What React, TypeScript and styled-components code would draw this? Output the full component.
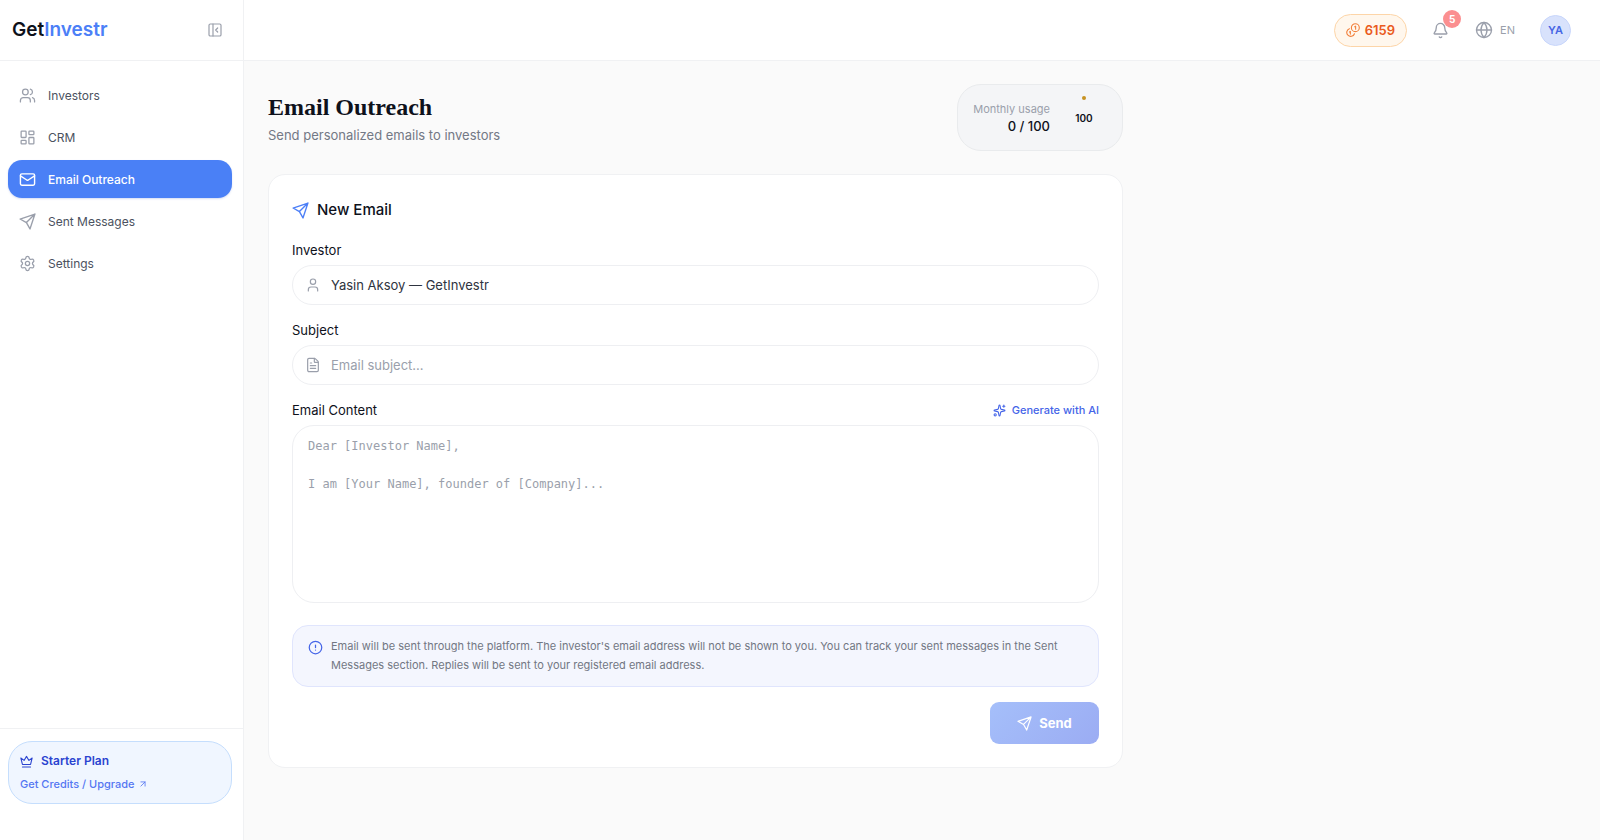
import React from "react";
import styled, { createGlobalStyle, css } from "styled-components";
import {
  Users, LayoutDashboard, Mail, Settings, PanelLeftClose, Bell, Globe,
  User, FileText, CircleAlert, Sparkles, ArrowUpRight,
} from "lucide-react";

const Global = createGlobalStyle`
  *, *::before, *::after { box-sizing: border-box; }
  body { margin: 0; background: #fafafa; font-family: Inter, "Open Sans", sans-serif; font-size: 13px; color: #0e111b; }
  button, input, textarea { font: inherit; color: inherit; }
  button { cursor: pointer; }
  h1, h2, p { margin: 0; }
`;

const Shell = styled.div`
  display: grid;
  grid-template-columns: 244px minmax(0, 1fr);
  min-height: 100vh;
`;

const Sidebar = styled.aside`
  display: flex;
  flex-direction: column;
  background: #fff;
  border-right: 1px solid #f0f1f3;
`;

const Brand = styled.div`
  display: flex;
  align-items: center;
  justify-content: space-between;
  height: 61px;
  padding: 0 20px 0 12px;
  border-bottom: 1px solid #f0f1f3;
`;

const Logo = styled.a`
  font-size: 19px;
  line-height: 24px;
  font-weight: 600;
  color: #0e111b;
  text-decoration: none;
  span { color: #4c7ff7; }
`;

const IconButton = styled.button`
  position: relative;
  display: flex;
  padding: 0;
  border: 0;
  background: none;
  color: #9a9fab;
`;

const Nav = styled.nav`
  flex: 1;
  display: flex;
  flex-direction: column;
  gap: 4px;
  padding: 15px 11px 15px 8px;
`;

const NavLink = styled.a<{ $active?: boolean }>`
  display: flex;
  align-items: center;
  gap: 12px;
  height: 38px;
  padding: 0 11px;
  border-radius: 14px;
  font-size: 12px;
  color: #4b5260;
  text-decoration: none;
  svg { color: #9a9fab; }
  ${(p) => p.$active && css`
    background: #4a80f6;
    color: #fff;
    font-weight: 500;
    box-shadow: 0 1px 2px rgba(40, 80, 200, 0.2);
    svg { color: #fff; }
  `}
`;

const PlanArea = styled.div`
  padding: 12px 11px 36px 8px;
  border-top: 1px solid #f0f1f3;
`;

const PlanCard = styled.div`
  display: flex;
  flex-direction: column;
  gap: 7px;
  padding: 11px;
  border: 1px solid #c5defd;
  border-radius: 24px;
  background: #f0f6ff;
`;

const PlanName = styled.div`
  display: flex;
  align-items: center;
  gap: 8px;
  font-size: 12px;
  line-height: 16px;
  font-weight: 600;
  color: #2b44d0;
`;

const PlanLink = styled.a`
  display: flex;
  align-items: center;
  gap: 4px;
  font-size: 11px;
  line-height: 16px;
  font-weight: 500;
  color: #5577f2;
  text-decoration: none;
`;

const Page = styled.div`
  display: flex;
  flex-direction: column;
`;

const TopBar = styled.header`
  display: flex;
  align-items: center;
  justify-content: flex-end;
  height: 61px;
  padding-right: 29px;
  background: #fff;
  border-bottom: 1px solid #f0f1f3;
`;

const Credits = styled.button`
  display: flex;
  align-items: center;
  gap: 5px;
  height: 33px;
  margin-right: 25px;
  padding: 0 11px;
  border: 1px solid #fdd5a8;
  border-radius: 17px;
  background: #fff7ed;
  color: #ea5a20;
  font-size: 13px;
  font-weight: 600;
  svg { color: #f2803c; }
`;

const Count = styled.span`
  position: absolute;
  left: 11px;
  top: -12px;
  width: 18px;
  height: 18px;
  border-radius: 50%;
  background: #fb8f90;
  color: #fff;
  font-size: 10px;
  line-height: 18px;
  font-weight: 700;
  text-align: center;
`;

const Language = styled.button`
  display: flex;
  align-items: center;
  gap: 7px;
  margin: 0 25px 0 26px;
  padding: 0;
  border: 0;
  background: none;
  color: #9a9fab;
  font-size: 11px;
`;

const Avatar = styled.button`
  width: 31px;
  height: 31px;
  padding: 0;
  border: 1px solid #c8d6fb;
  border-radius: 50%;
  background: #d8e2fc;
  color: #4666e4;
  font-size: 11px;
  font-weight: 600;
`;

const Content = styled.main`
  width: 100%;
  max-width: 903px;
  padding: 23px 24px;
`;

const Heading = styled.div`
  display: flex;
  align-items: center;
  justify-content: space-between;
  margin-bottom: 23px;
`;

const Title = styled.h1`
  padding-top: 2px;
  font-family: "Liberation Serif", serif;
  font-size: 24px;
  line-height: 32px;
  font-weight: 700;
`;

const Subtitle = styled.p`
  line-height: 24px;
  color: #737885;
`;

const Usage = styled.section`
  display: flex;
  align-items: center;
  gap: 10px;
  height: 67px;
  padding: 0 14px 0 15px;
  border: 1px solid #e9ebed;
  border-radius: 24px;
  background: #f4f5f7;
`;

const UsageText = styled.div`
  text-align: right;
  font-size: 11px;
  line-height: 17px;
  color: #9a9fab;
  strong { display: block; font-size: 13px; font-weight: 500; color: #0e111b; }
`;

const Gauge = styled.svg`
  font-size: 10px;
  font-weight: 600;
`;

const Card = styled.section`
  padding: 23px;
  border: 1px solid #f0f1f3;
  border-radius: 17px;
  background: #fff;
`;

const CardTitle = styled.h2`
  display: flex;
  align-items: center;
  gap: 8px;
  margin-bottom: 16px;
  font-size: 15px;
  line-height: 24px;
  font-weight: 500;
  svg { color: #4c7ff7; }
`;

const Field = styled.div`
  margin-bottom: 13px;
`;

const FieldHead = styled.div`
  display: flex;
  align-items: center;
  justify-content: space-between;
  height: 24px;
  margin-bottom: 3px;
`;

const Label = styled.label`
  line-height: 24px;
`;

const InputBox = styled.div`
  display: flex;
  align-items: center;
  gap: 10px;
  height: 40px;
  padding: 0 12px;
  border: 1px solid #eeeff2;
  border-radius: 20px;
  color: #9a9fab;
`;

const Input = styled.input`
  flex: 1;
  min-width: 0;
  padding: 0;
  border: 0;
  outline: 0;
  background: none;
  color: #2e3440;
  &::placeholder { color: #9a9fab; opacity: 1; }
`;

const Generate = styled.button`
  display: flex;
  align-items: center;
  gap: 6px;
  padding: 0;
  border: 0;
  background: none;
  color: #4565e8;
  font-size: 11px;
  font-weight: 500;
`;

const Body = styled.textarea`
  display: block;
  width: 100%;
  height: 178px;
  padding: 11px 15px;
  border: 1px solid #eeeff2;
  border-radius: 22px;
  outline: 0;
  resize: none;
  background: #fff;
  font-family: "DejaVu Sans Mono", monospace;
  font-size: 12px;
  line-height: 19px;
  &::placeholder { color: #9a9fab; opacity: 1; }
`;

const Notice = styled.div`
  display: flex;
  gap: 8px;
  margin: 22px 0 15px;
  padding: 11px 15px;
  border: 1px solid #e0e5fd;
  border-radius: 16px;
  background: #f4f6fe;
  color: #727783;
  font-size: 11px;
  line-height: 19px;
  svg { flex: none; margin-top: 3px; color: #4565e8; }
`;

const Actions = styled.div`
  display: flex;
  justify-content: flex-end;
`;

const SendButton = styled.button`
  display: flex;
  align-items: center;
  justify-content: center;
  gap: 7px;
  width: 109px;
  height: 42px;
  border: 0;
  border-radius: 9px;
  background: linear-gradient(135deg, #a5bffa, #9bacf3);
  color: #fff;
  font-size: 13px;
  font-weight: 700;
`;

const strokes = { fill: "none", stroke: "currentColor", strokeWidth: 1.9, strokeLinecap: "round", strokeLinejoin: "round" } as const;

const Plane = ({ size }: { size: number }) => (
  <svg width={size} height={size} viewBox="0 0 24 24" {...strokes}>
    <path d="M22.5 1.5 15.5 22.5 10.5 13.5 1.5 8.5Z M22.5 1.5 10.5 13.5" />
  </svg>
);

const CoinsIcon = () => (
  <svg width="14" height="14" viewBox="0 0 24 24" {...strokes}>
    <circle cx="16" cy="8" r="6.8" />
    <path d="M5.8 9.700a6.800 6.800 0 1 0 8.700 8.700M15 6.500l1.500-1v5M6 15.500l1.500-1v4.500" />
  </svg>
);

const CrownIcon = () => (
  <svg width="13" height="13" viewBox="0 0 24 24" {...strokes} strokeWidth={2}>
    <path d="M4.500 17.500 1.500 5.500 7.500 10 12 2.500l4.500 7.500 6-4.500-3 12ZM4.500 22h15" />
  </svg>
);

const nav = [
  { label: "Investors", icon: <Users size={17} strokeWidth={1.8} /> },
  { label: "CRM", icon: <LayoutDashboard size={17} strokeWidth={1.8} /> },
  { label: "Email Outreach", icon: <Mail size={17} strokeWidth={2} />, active: true },
  { label: "Sent Messages", icon: <Plane size={17} /> },
  { label: "Settings", icon: <Settings size={17} strokeWidth={1.8} /> },
];

export default function App() {
  return (
    <Shell>
      <Global />
      <Sidebar>
        <Brand>
          <Logo href="#">Get<span>Investr</span></Logo>
          <IconButton aria-label="Collapse sidebar"><PanelLeftClose size={16} strokeWidth={1.8} /></IconButton>
        </Brand>
        <Nav>
          {nav.map((item) => (
            <NavLink key={item.label} href="#" $active={item.active} aria-current={item.active ? "page" : undefined}>
              {item.icon}{item.label}
            </NavLink>
          ))}
        </Nav>
        <PlanArea>
          <PlanCard>
            <PlanName><CrownIcon />Starter Plan</PlanName>
            <PlanLink href="#">Get Credits / Upgrade <ArrowUpRight size={10} /></PlanLink>
          </PlanCard>
        </PlanArea>
      </Sidebar>
      <Page>
        <TopBar>
          <Credits><CoinsIcon />6159</Credits>
          <IconButton aria-label="Notifications"><Bell size={17} strokeWidth={1.9} /><Count>5</Count></IconButton>
          <Language><Globe size={18} strokeWidth={1.8} />EN</Language>
          <Avatar>YA</Avatar>
        </TopBar>
        <Content>
          <Heading>
            <div>
              <Title>Email Outreach</Title>
              <Subtitle>Send personalized emails to investors</Subtitle>
            </div>
            <Usage>
              <UsageText>Monthly usage<strong>0 / 100</strong></UsageText>
              <Gauge width="48" height="48" viewBox="0 0 48 48">
                <circle cx="24" cy="4" r="2" fill="#c79222" />
                <text x="24" y="28" textAnchor="middle" fill="#0e111b">100</text>
              </Gauge>
            </Usage>
          </Heading>
          <Card>
            <CardTitle><Plane size={17} />New Email</CardTitle>
            <Field>
              <FieldHead><Label htmlFor="investor">Investor</Label></FieldHead>
              <InputBox>
                <User size={16} strokeWidth={1.8} />
                <Input id="investor" defaultValue="Yasin Aksoy — GetInvestr" />
              </InputBox>
            </Field>
            <Field>
              <FieldHead><Label htmlFor="subject">Subject</Label></FieldHead>
              <InputBox>
                <FileText size={16} strokeWidth={1.8} />
                <Input id="subject" placeholder="Email subject..." />
              </InputBox>
            </Field>
            <FieldHead>
              <Label htmlFor="content">Email Content</Label>
              <Generate><Sparkles size={13} />Generate with AI</Generate>
            </FieldHead>
            <Body id="content" placeholder={"Dear [Investor Name],\n\nI am [Your Name], founder of [Company]..."} />
            <Notice>
              <CircleAlert size={15} />
              <p>Email will be sent through the platform. The investor's email address will not be shown to you. You can track your sent messages in the Sent Messages section. Replies will be sent to your registered email address.</p>
            </Notice>
            <Actions><SendButton><Plane size={15} />Send</SendButton></Actions>
          </Card>
        </Content>
      </Page>
    </Shell>
  );
}
